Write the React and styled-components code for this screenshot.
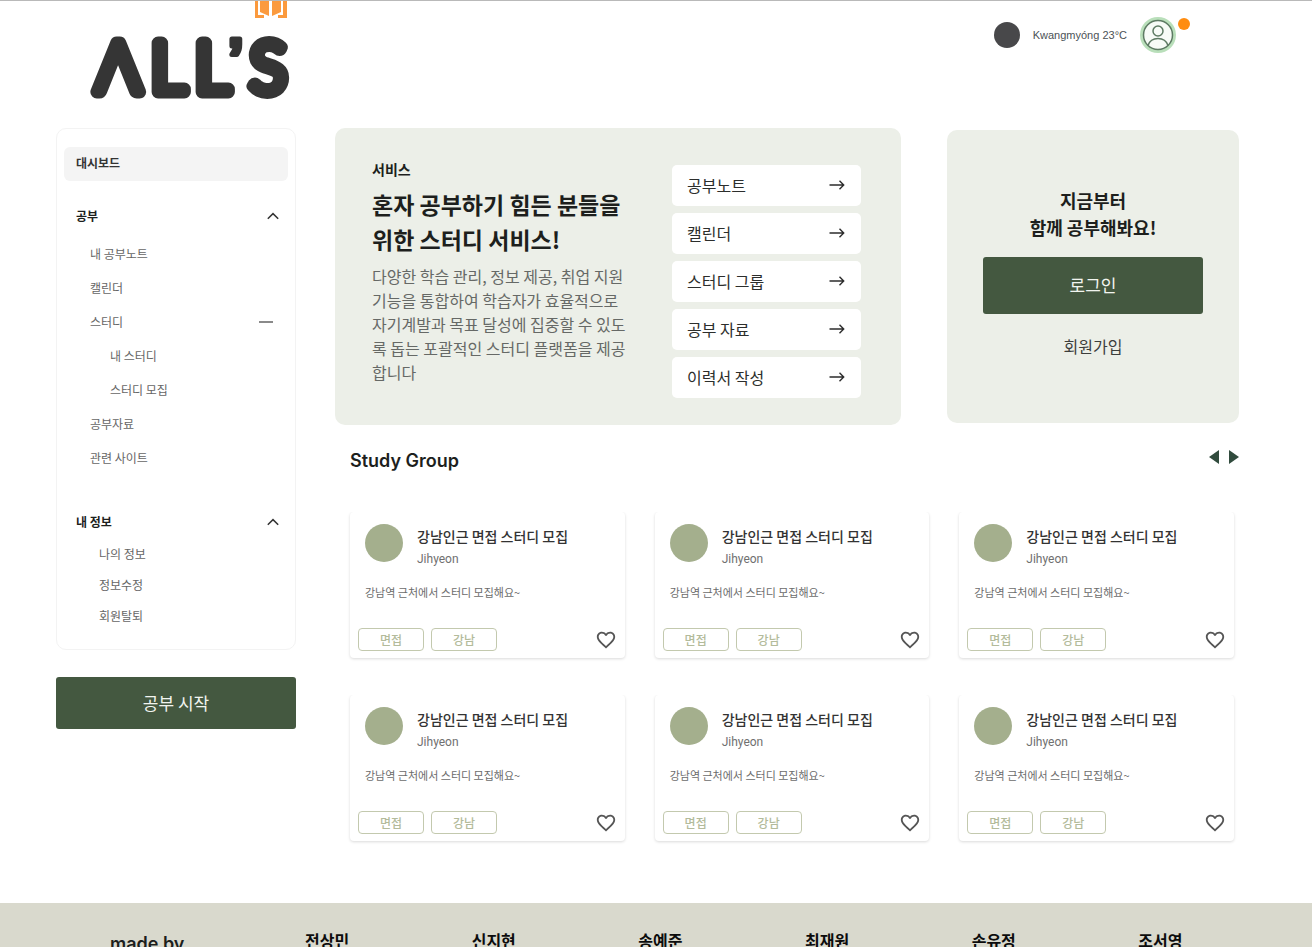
import React from "react";
import styled, { createGlobalStyle } from "styled-components";

const korean = `"Noto Sans CJK KR", "Noto Sans", sans-serif`;
const latin = `Roboto, "Noto Sans CJK KR", sans-serif`;

const GlobalStyle = createGlobalStyle`
  *, *::before, *::after { box-sizing: border-box; }
  body { margin: 0; background: #fff; color: #1d1f1d; font-family: ${korean}; }
  h1, h2, h3, p, ul { margin: 0; padding: 0; }
  ul { list-style: none; }
  a { color: inherit; text-decoration: none; }
  button { font-family: inherit; border: 0; padding: 0; background: none; color: inherit; cursor: pointer; }
  svg { display: block; }
`;

const Page = styled.div`
  display: flex;
  flex-direction: column;
  height: 100vh;
  overflow: hidden;
  border-top: 1px solid #b9b9b9;
`;

const Header = styled.header`
  display: flex;
  justify-content: space-between;
  align-items: flex-start;
  flex-shrink: 0;
  height: 127px;
  padding: 0 122px 0 84px;
`;

const Status = styled.div`
  display: flex;
  align-items: center;
  padding-top: 16px;
`;

const WeatherDot = styled.span`
  width: 26px;
  height: 26px;
  border-radius: 50%;
  background: #48484a;
`;

const Weather = styled.span`
  margin: 0 13px;
  font: 11px/16px "Liberation Sans", sans-serif;
  color: #4c5256;
`;

const Profile = styled.button`
  position: relative;
  margin-right: 14px;
`;

const Badge = styled.span`
  position: absolute;
  top: 1px;
  right: -14px;
  width: 12px;
  height: 12px;
  border-radius: 50%;
  background: #ff8c0f;
`;

const Body = styled.div`
  display: flex;
  align-items: flex-start;
  flex-shrink: 0;
  gap: 39px;
  padding: 0 73px 62px 56px;
`;

const Sidebar = styled.aside`
  flex: 0 0 240px;
`;

const Nav = styled.nav`
  padding: 18px 7px;
  border: 1px solid #f3f3f3;
  border-radius: 10px;
`;

const NavHome = styled.a`
  display: block;
  padding: 0 12px 2px;
  border-radius: 6px;
  background: #f4f4f4;
  color: #333;
  font-size: 12px;
  font-weight: 700;
  line-height: 32px;
`;

const NavHeading = styled.button`
  display: flex;
  align-items: center;
  justify-content: space-between;
  width: 100%;
  margin-top: ${(p) => p.$gap}px;
  padding: 0 9px 0 12px;
  font-size: 12px;
  font-weight: 700;
  line-height: ${(p) => (p.$compact ? 33 : 34)}px;
`;

const NavList = styled.ul`
  padding-top: ${(p) => (p.$compact ? 0 : 4)}px;
  font-size: 12px;
  line-height: ${(p) => (p.$compact ? 31 : 34)}px;
  color: #666;
`;

const NavItem = styled.li`
  display: flex;
  align-items: center;
  justify-content: space-between;
  padding: 0 15px 0 ${(p) => p.$indent}px;
`;

const Primary = styled.button`
  display: block;
  width: 100%;
  height: ${(p) => p.$height}px;
  margin-top: ${(p) => p.$gap}px;
  padding-bottom: 2px;
  border-radius: 3px;
  background: #445840;
  color: #f1f4ef;
  font-size: 17px;
`;

const Main = styled.main`
  flex: 1;
  min-width: 0;
`;

const Top = styled.div`
  display: flex;
  align-items: center;
  gap: 46px;
`;

const Hero = styled.section`
  display: flex;
  flex: 1;
  justify-content: space-between;
  gap: 40px;
  padding: 31px 40px 27px 37px;
  border-radius: 10px;
  background: #ecefe8;
`;

const HeroText = styled.div`
  flex: 1;
`;

const Eyebrow = styled.p`
  font-size: 14px;
  font-weight: 700;
  line-height: 20px;
`;

const HeroTitle = styled.h1`
  margin-top: 8px;
  font-size: 23px;
  font-weight: 700;
  line-height: 35px;
`;

const HeroCopy = styled.p`
  margin-top: 7px;
  font-size: 16px;
  line-height: 24px;
  color: #666966;
`;

const Shortcuts = styled.ul`
  display: flex;
  flex: 0 0 189px;
  flex-direction: column;
  gap: 7px;
  padding-top: 6px;
`;

const Shortcut = styled.a`
  display: flex;
  align-items: center;
  justify-content: space-between;
  height: 41px;
  padding: 0 16px 1px 15px;
  border-radius: 5px;
  background: #fff;
  color: #2c2e2c;
  font-size: 16px;
  line-height: 40px;
`;

const LoginCard = styled.section`
  flex: 0 0 292px;
  padding: 57px 36px 64px;
  border-radius: 10px;
  background: #ecefe8;
  text-align: center;
`;

const LoginTitle = styled.h2`
  font-size: 18px;
  font-weight: 700;
  line-height: 27px;
`;

const SignUp = styled.a`
  display: block;
  margin-top: 20px;
  padding-bottom: 1px;
  font-size: 16px;
  line-height: 24px;
  color: #3c3e3c;
`;

const Groups = styled.section`
  padding: 22px 5px 0 15px;
`;

const GroupsHeader = styled.div`
  display: flex;
  justify-content: space-between;
  align-items: flex-start;
  margin-right: -5px;
`;

const GroupsTitle = styled.h2`
  font-family: Inter, sans-serif;
  font-size: 18px;
  font-weight: 600;
  line-height: 28px;
`;

const Pager = styled.div`
  display: flex;
  gap: 10px;
  padding-top: 3px;
`;

const Grid = styled.div`
  display: grid;
  grid-template-columns: repeat(3, 1fr);
  gap: 37px 30px;
  margin-top: 37px;
`;

const Card = styled.article`
  padding: 12px 8px 7px;
  border-radius: 4px;
  box-shadow: 0 1px 3px rgba(0, 0, 0, 0.15);
  clip-path: inset(0 -4px -4px -4px);
`;

const CardHead = styled.div`
  display: flex;
  gap: 14px;
  padding-left: 7px;
`;

const Avatar = styled.span`
  width: 38px;
  height: 38px;
  border-radius: 50%;
  background: #a4af8d;
`;

const CardTitle = styled.h3`
  padding-top: 1px;
  color: #333;
  font-size: 14px;
  font-weight: 500;
  line-height: 22px;
`;

const Author = styled.p`
  font-family: ${latin};
  font-size: 12px;
  line-height: 24px;
  color: #707070;
`;

const Summary = styled.p`
  padding: 11px 7px 0;
  font-size: 11px;
  line-height: 20px;
  color: #6c6c6c;
`;

const CardFoot = styled.div`
  display: flex;
  align-items: center;
  gap: 7px;
  margin-top: 26px;
`;

const Tag = styled.span`
  width: 66px;
  border: 1px solid #c3c9ae;
  border-radius: 4px;
  color: #b3bb9b;
  font-size: 12px;
  font-weight: 500;
  line-height: 21px;
  text-align: center;
`;

const Like = styled.button`
  margin-left: auto;
`;

const Footer = styled.footer`
  display: flex;
  align-items: flex-start;
  flex: 1 0 auto;
  padding: 25px 7px 40px 110px;
  background: #d9d9cd;
`;

const MadeBy = styled.p`
  flex: 0 0 195px;
  padding-top: 4px;
  font-family: Inter, sans-serif;
  font-size: 18px;
  font-weight: 600;
  line-height: 24px;
`;

const Credits = styled.ul`
  display: grid;
  flex: 1;
  grid-template-columns: repeat(6, 1fr);
  font-size: 16px;
  font-weight: 700;
  line-height: 24px;
  color: #0c0c0c;
`;

const Wordmark = styled.text`
  font-family: Lato, sans-serif;
  font-size: 68px;
  font-weight: 300;
  fill: #353535;
  stroke: #353535;
  stroke-width: 13px;
  stroke-linejoin: round;
`;

const Apostrophe = styled.tspan`
  font-family: "Liberation Sans", sans-serif;
  font-size: 56px;
  font-weight: 700;
  stroke-width: 5px;
`;

const Logo = () => (
  <svg width="216" height="110" viewBox="84 1 216 110" role="img" aria-label="ALL'S">
    <g fill="#fb9a3e">
      <path d="M260 0h9v16l-9-4z" />
      <path d="M272 0h9v12l-9 4z" />
      <path d="M255 0h3v15h6v3h-9zM283 0h4v18h-9v-3h5z" />
    </g>
    <Wordmark y="92">
      <tspan x="96">Λ</tspan>
      <tspan x="151">L</tspan>
      <tspan x="195">L</tspan>
      <Apostrophe x="228" y="77">’</Apostrophe>
      <tspan x="250" y="92">S</tspan>
    </Wordmark>
  </svg>
);

const ProfileIcon = () => (
  <svg width="36" height="36" viewBox="0 0 36 36" fill="none" stroke="#5d7a63" strokeWidth="1.5">
    <circle cx="18" cy="18" r="18" fill="#b9dfba" stroke="none" />
    <circle cx="18" cy="18" r="14.5" fill="#f7fbf7" />
    <circle cx="18" cy="14" r="5" />
    <path d="M8 28.500c1.500-4.500 5-7 10-7s8.500 2.500 10 7" />
  </svg>
);

const Chevron = () => (
  <svg width="12" height="8" viewBox="0 0 12 8" fill="none" stroke="#333" strokeWidth="1.500">
    <path d="M.8 6.800 6 1.600l5.200 5.200" />
  </svg>
);

const Minus = () => (
  <svg width="14" height="2" viewBox="0 0 14 2">
    <path d="M0 0h14v2H0z" fill="#8a8a8a" />
  </svg>
);

const Arrow = () => (
  <svg width="16" height="12" viewBox="0 0 16 12" fill="none" stroke="#2c2c2c" strokeWidth="1.400">
    <path d="M.5 6h14M10.500 1.800 14.700 6l-4.200 4.200" />
  </svg>
);

const Triangle = ({ left }) => (
  <svg width="10" height="14" viewBox="0 0 10 14">
    <path d={left ? "M10 0v14L0 7z" : "M0 0v14l10-7z"} fill="#314b3d" />
  </svg>
);

const Heart = () => (
  <svg width="22" height="22" viewBox="0 0 24 24" fill="#555">
    <path d="M16.500 3c-1.740 0-3.410.81-4.500 2.090C10.910 3.810 9.240 3 7.500 3 4.420 3 2 5.420 2 8.500c0 3.780 3.400 6.860 8.550 11.540L12 21.350l1.450-1.320C18.600 15.360 22 12.280 22 8.500 22 5.420 19.580 3 16.500 3zm-4.400 15.550-.1.100-.1-.1C7.140 14.240 4 11.390 4 8.500 4 6.500 5.500 5 7.500 5c1.540 0 3.040.99 3.570 2.360h1.870C13.460 5.990 14.960 5 16.500 5c2 0 3.500 1.500 3.500 3.500 0 2.890-3.140 5.740-7.900 10.050z" />
  </svg>
);

const studyLinks = [
  { label: "내 공부노트" },
  { label: "캘린더" },
  { label: "스터디", open: true },
  { label: "내 스터디", nested: true },
  { label: "스터디 모집", nested: true },
  { label: "공부자료" },
  { label: "관련 사이트" },
];
const accountLinks = ["나의 정보", "정보수정", "회원탈퇴"];
const shortcuts = ["공부노트", "캘린더", "스터디 그룹", "공부 자료", "이력서 작성"];
const credits = ["전상민", "신지현", "송예준", "최재원", "손유정", "조서영"];
const groups = Array.from({ length: 6 }, (_, id) => ({
  id,
  title: "강남인근 면접 스터디 모집",
  author: "Jihyeon",
  summary: "강남역 근처에서 스터디 모집해요~",
  tags: ["면접", "강남"],
}));

const GroupCard = ({ group }) => (
  <Card>
    <CardHead>
      <Avatar />
      <div>
        <CardTitle>{group.title}</CardTitle>
        <Author>{group.author}</Author>
      </div>
    </CardHead>
    <Summary>{group.summary}</Summary>
    <CardFoot>
      {group.tags.map((tag) => (
        <Tag key={tag}>{tag}</Tag>
      ))}
      <Like aria-label="좋아요">
        <Heart />
      </Like>
    </CardFoot>
  </Card>
);

export default function App() {
  return (
    <>
      <GlobalStyle />
      <Page>
        <Header>
          <a href="#home">
            <Logo />
          </a>
          <Status>
            <WeatherDot />
            <Weather>Kwangmyóng 23°C</Weather>
            <Profile aria-label="프로필">
              <ProfileIcon />
              <Badge />
            </Profile>
          </Status>
        </Header>
        <Body>
          <Sidebar>
            <Nav>
              <NavHome href="#dashboard">대시보드</NavHome>
              <NavHeading $gap={18}>
                공부
                <Chevron />
              </NavHeading>
              <NavList>
                {studyLinks.map((link) => (
                  <NavItem key={link.label} $indent={link.nested ? 46 : 26}>
                    <a href="#study">{link.label}</a>
                    {link.open && <Minus />}
                  </NavItem>
                ))}
              </NavList>
              <NavHeading $gap={30} $compact>
                내 정보
                <Chevron />
              </NavHeading>
              <NavList $compact>
                {accountLinks.map((label) => (
                  <NavItem key={label} $indent={35}>
                    <a href="#account">{label}</a>
                  </NavItem>
                ))}
              </NavList>
            </Nav>
            <Primary $height={52} $gap={27}>공부 시작</Primary>
          </Sidebar>
          <Main>
            <Top>
              <Hero>
                <HeroText>
                  <Eyebrow>서비스</Eyebrow>
                  <HeroTitle>
                    혼자 공부하기 힘든 분들을
                    <br />
                    위한 스터디 서비스!
                  </HeroTitle>
                  <HeroCopy>
                    다양한 학습 관리, 정보 제공, 취업 지원 기능을 통합하여 학습자가 효율적으로
                    자기계발과 목표 달성에 집중할 수 있도록 돕는 포괄적인 스터디 플랫폼을 제공합니다
                  </HeroCopy>
                </HeroText>
                <Shortcuts>
                  {shortcuts.map((label) => (
                    <li key={label}>
                      <Shortcut href="#shortcut">
                        {label}
                        <Arrow />
                      </Shortcut>
                    </li>
                  ))}
                </Shortcuts>
              </Hero>
              <LoginCard>
                <LoginTitle>
                  지금부터
                  <br />
                  함께 공부해봐요!
                </LoginTitle>
                <Primary $height={57} $gap={16}>로그인</Primary>
                <SignUp href="#signup">회원가입</SignUp>
              </LoginCard>
            </Top>
            <Groups>
              <GroupsHeader>
                <GroupsTitle>Study Group</GroupsTitle>
                <Pager>
                  <button aria-label="이전">
                    <Triangle left />
                  </button>
                  <button aria-label="다음">
                    <Triangle />
                  </button>
                </Pager>
              </GroupsHeader>
              <Grid>
                {groups.map((group) => (
                  <GroupCard key={group.id} group={group} />
                ))}
              </Grid>
            </Groups>
          </Main>
        </Body>
        <Footer>
          <MadeBy>made by</MadeBy>
          <Credits>
            {credits.map((name) => (
              <li key={name}>{name}</li>
            ))}
          </Credits>
        </Footer>
      </Page>
    </>
  );
}
